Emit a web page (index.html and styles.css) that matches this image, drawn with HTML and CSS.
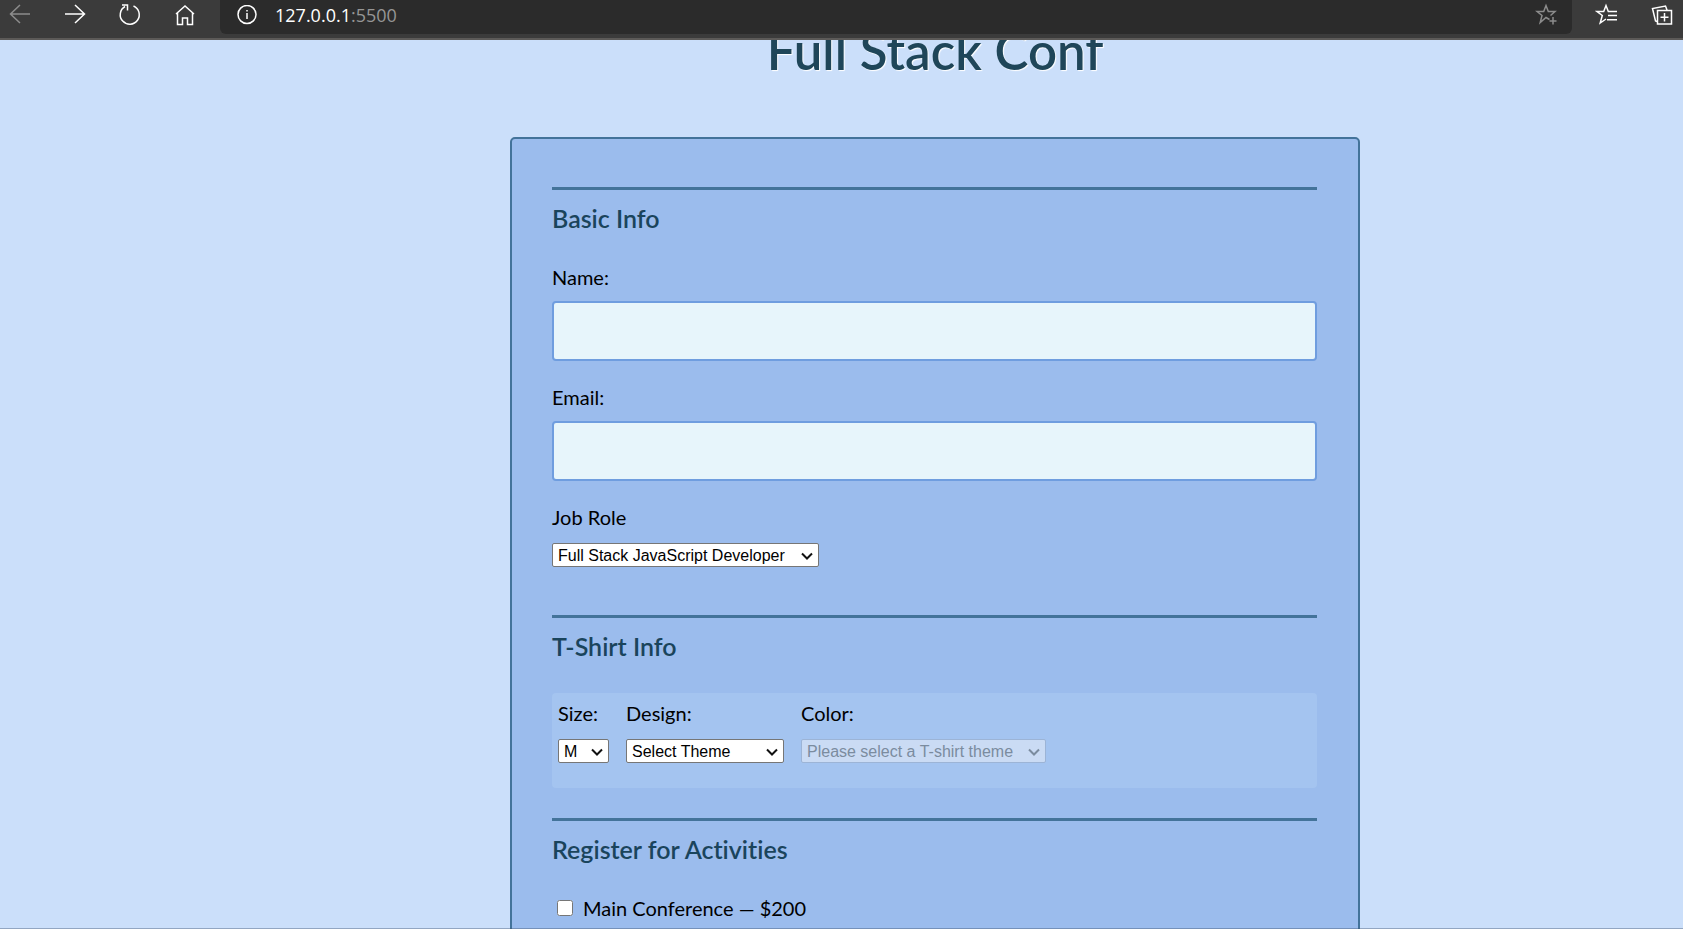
FILE: index.html
```html
<!DOCTYPE html>
<html lang="en">
<head>
<meta charset="utf-8">
<title>Full Stack Conf</title>
<link rel="stylesheet" href="styles.css">
</head>
<body>
<header class="toolbar">
  <nav class="nav-buttons" aria-label="Browser navigation">
    <button class="icon-button dim" type="button" aria-label="Back"><svg width="24" height="24" viewBox="0 0 24 24"><path d="M22 11H2.500M12 2L2.500 11L12 20"/></svg></button>
    <button class="icon-button" type="button" aria-label="Forward"><svg width="24" height="24" viewBox="0 0 24 24"><path d="M2 11H21.500M12 2L21.500 11L12 20"/></svg></button>
    <button class="icon-button" type="button" aria-label="Refresh"><svg width="24" height="24" viewBox="0 0 24 24"><path d="M15.500 3A9.500 9.500 0 1 1 7 3.500M4 2H9.500V7.500"/></svg></button>
    <button class="icon-button" type="button" aria-label="Home"><svg width="24" height="24" viewBox="0 0 24 24"><path d="M3 11L12 3L21 11M4.500 10V21.500H9.500V15H14.500V21.500H19.500V10"/></svg></button>
  </nav>
  <div class="address">
    <svg class="info" width="20" height="20" viewBox="0 0 20 20"><circle cx="10" cy="9.500" r="9"/><path d="M10 8V14M10 5V6.500"/></svg>
    <span class="url">127.0.0.1<span class="port">:5500</span></span>
    <button class="icon-button dim" type="button" aria-label="Add to favorites"><svg width="24" height="24" viewBox="0 0 24 24"><path d="M14.500 16.500L11 14.500L5.200 19.500L7 12.500L2 8.500H8.700L11 2.500L13.300 8.500H20L15.500 12.500M18 14V21.500M14.500 18H21.500"/></svg></button>
  </div>
  <div class="actions">
    <button class="icon-button" type="button" aria-label="Favorites"><svg width="24" height="24" viewBox="0 0 24 24"><path d="M22 8.500H13.300L11 2.500L8.700 8.500H2L7.300 12.500L5.200 20L11 16M13 12.500H22M12 16.800H22"/></svg></button>
    <button class="icon-button" type="button" aria-label="Collections"><svg width="24" height="24" viewBox="0 0 24 24"><path d="M7.500 7.500H21.500V21H7.500ZM14.500 10V18.500M10.500 14.200H18.500M7 18.500L5.500 18L2.500 5.500L15.500 3L17 7"/></svg></button>
  </div>
</header>
<main class="page">
  <h1 class="title">Full Stack Conf</h1>
  <form class="card">
    <fieldset class="section">
      <legend class="heading">Basic Info</legend>
      <label class="label" for="name">Name:</label>
      <input class="text-input" id="name" type="text">
      <label class="label" for="email">Email:</label>
      <input class="text-input" id="email" type="email">
      <label class="label" for="role">Job Role</label>
      <span class="picker role"><select id="role"><option>Full Stack JavaScript Developer</option></select><svg width="12" height="8" viewBox="0 0 12 8"><path d="M1 1.500L6 6.500L11 1.500"/></svg></span>
    </fieldset>
    <fieldset class="section">
      <legend class="heading">T-Shirt Info</legend>
      <div class="shirt-box">
        <div class="field">
          <label class="label" for="size">Size:</label>
          <span class="picker size"><select id="size"><option>M</option></select><svg width="12" height="8" viewBox="0 0 12 8"><path d="M1 1.500L6 6.500L11 1.500"/></svg></span>
        </div>
        <div class="field">
          <label class="label" for="design">Design:</label>
          <span class="picker design"><select id="design"><option>Select Theme</option></select><svg width="12" height="8" viewBox="0 0 12 8"><path d="M1 1.500L6 6.500L11 1.500"/></svg></span>
        </div>
        <div class="field">
          <label class="label" for="color">Color:</label>
          <span class="picker color"><select id="color" disabled><option>Please select a T-shirt theme</option></select><svg width="12" height="8" viewBox="0 0 12 8"><path d="M1 1.500L6 6.500L11 1.500"/></svg></span>
        </div>
      </div>
    </fieldset>
    <fieldset class="section">
      <legend class="heading">Register for Activities</legend>
      <label class="activity"><input type="checkbox">Main Conference — $200</label>
    </fieldset>
  </form>
</main>
</body>
</html>
```
FILE: styles.css
```css
* {
  box-sizing: border-box;
}

body {
  display: flex;
  flex-direction: column;
  height: 100vh;
  margin: 0;
  overflow: hidden;
  background: #cbdffa;
  color: #000;
  font-family: Lato, "Noto Sans", sans-serif;
  font-size: 20px;
  font-variant-ligatures: none;
}

/* Browser toolbar */
.toolbar {
  display: flex;
  flex: none;
  height: 40px;
  background: #3b3b3b;
  border-bottom: 2px solid #5c5a58;
}

.nav-buttons {
  display: flex;
  gap: 31px;
  width: 220px;
  height: 30px;
  padding-left: 8px;
}

.icon-button {
  display: flex;
  flex: none;
  align-items: center;
  justify-content: center;
  width: 24px;
  height: 30px;
  padding: 0;
  border: 0;
  background: none;
  color: #fff;
}

.dim {
  color: #8c8c8c;
}

.toolbar svg {
  fill: none;
  stroke: currentColor;
  stroke-width: 1.5;
}

.address {
  display: flex;
  flex: 1;
  align-items: center;
  height: 34px;
  padding: 0 13px 4px 17px;
  border-radius: 0 0 6px 6px;
  background: #2b2b2b;
  color: #fff;
}

.url {
  flex: 1;
  margin-left: 18px;
  font-family: "Open Sans", sans-serif;
  font-size: 18px;
  line-height: 30px;
}

.port {
  color: #969696;
}

.actions {
  display: flex;
  gap: 31px;
  padding: 0 9px 0 23px;
  height: 30px;
}

/* Page */
.page {
  position: relative;
  flex: 1;
  min-height: 0;
  padding-left: 187px;
  overflow: hidden;
}

.page::after {
  content: "";
  position: absolute;
  right: 0;
  bottom: 0;
  left: 0;
  height: 1px;
  background: rgba(60, 80, 110, 0.4);
}

.title {
  margin: -19px 0 56px;
  color: #1f4659;
  font-size: 51px;
  font-weight: 600;
  line-height: 60px;
  text-align: center;
  text-shadow: 1px 1px 1px #fff;
}

.card {
  max-width: 850px;
  margin: 0 auto;
  padding: 48px 41px 80px 40px;
  border: 2px solid #43739a;
  border-radius: 5px;
  background: #9bbced;
}

.section {
  min-width: 0;
  margin: 0;
  padding: 16px 0 0;
  border: 0;
  border-top: 3px solid #43739a;
}

.heading {
  float: left;
  width: 100%;
  margin-bottom: 35px;
  padding: 0;
  color: #1a445c;
  font-size: 25px;
  font-weight: 600;
  line-height: 24px;
}

.label {
  display: block;
  clear: both;
  line-height: 24px;
}

.text-input {
  display: block;
  width: 100%;
  height: 60px;
  margin: 12px 0 24px;
  padding: 0 16px;
  border: 2px solid #6f9ddf;
  border-radius: 4px;
  background: #e7f5fb;
  font: inherit;
}

.picker {
  position: relative;
  display: flex;
  height: 24px;
  margin-top: 14px;
}

.picker select {
  width: 100%;
  height: 100%;
  padding: 0 20px 0 5px;
  border: 1px solid #767676;
  border-radius: 2px;
  appearance: none;
  background: #fff;
  color: #000;
  font-family: "Liberation Sans", Arial, sans-serif;
  font-size: 16px;
}

.picker svg {
  position: absolute;
  top: 9px;
  right: 6px;
  fill: none;
  stroke: #111;
  stroke-width: 2;
  pointer-events: none;
}

.picker select:disabled {
  border-color: #9cb4d6;
  background: #cadbf4;
  color: #7b8c9f;
  opacity: 1;
}

.picker select:disabled + svg {
  stroke: #7b8c9f;
}

.role {
  width: 267px;
  margin-bottom: 48px;
}

.size {
  width: 51px;
}

.design {
  width: 158px;
}

.color {
  width: 245px;
}

.shirt-box {
  display: flex;
  clear: both;
  gap: 17px;
  margin-bottom: 30px;
  padding: 8px 6px 25px;
  border-radius: 4px;
  background: #a4c4f0;
}

.activity {
  display: flex;
  clear: both;
  align-items: center;
  gap: 10px;
  line-height: 24px;
}

.activity input {
  width: 16px;
  height: 16px;
  margin: 0 0 0 5px;
}
```
